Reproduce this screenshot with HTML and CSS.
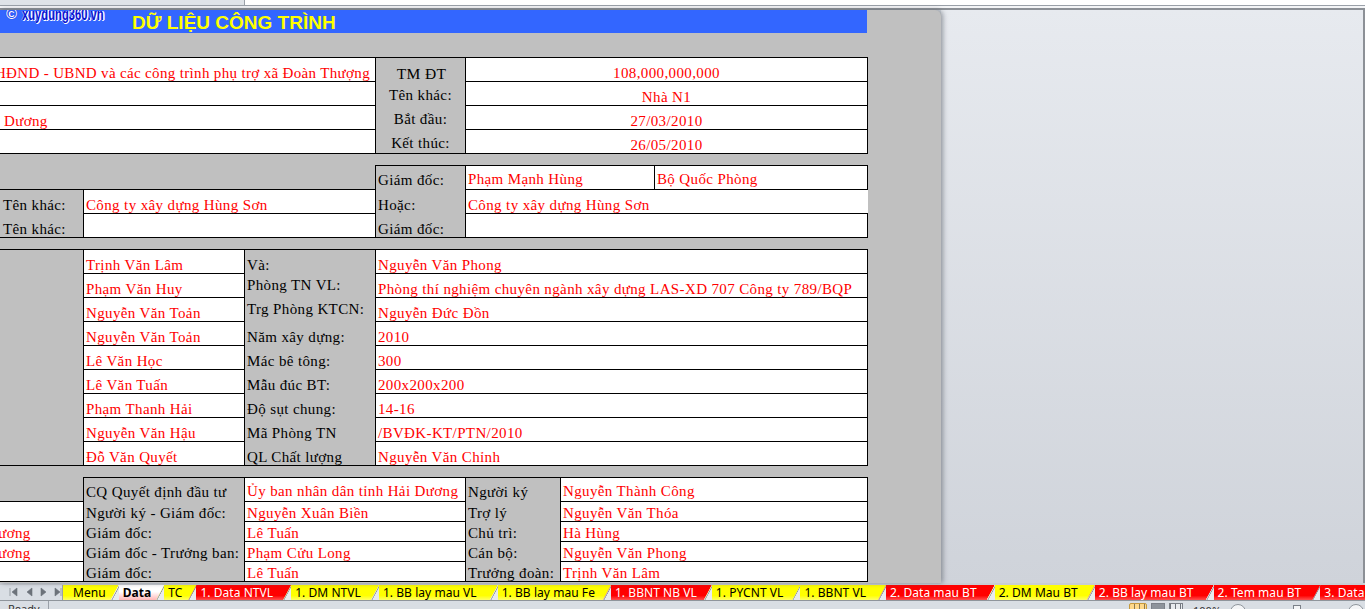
FILE: index.html
```html
<!DOCTYPE html>
<html lang="vi">
<head>
<meta charset="utf-8">
<title>Dữ liệu công trình</title>
<link rel="stylesheet" href="styles.css">
</head>
<body>
<div class="app">
  <div class="top">
    <div class="top-name"></div>
    <div class="top-formula"></div>
  </div>
  <div class="work">
    <div class="sheet">
      <div class="logo"><span class="logo-c">©</span><span class="logo-t">xuydung360.vn</span></div>
      <div class="banner"><h1>DỮ LIỆU CÔNG TRÌNH</h1></div>
      <table class="grid t1">
        <colgroup><col class="c-a"><col class="c-b"><col class="c-c"></colgroup>
        <tr><td class="val end">HĐND - UBND và các công trình phụ trợ xã Đoàn Thượng</td><td class="lab ctr big">TM ĐT</td><td class="val ctr">108,000,000,000</td></tr>
        <tr><td class="val"></td><td class="lab ctr up">Tên khác:</td><td class="val ctr">Nhà N1</td></tr>
        <tr><td class="val ind">Dương</td><td class="lab ctr up">Bắt đầu:</td><td class="val ctr">27/03/2010</td></tr>
        <tr><td class="val"></td><td class="lab ctr up">Kết thúc:</td><td class="val ctr">26/05/2010</td></tr>
      </table>
      <table class="grid t2">
        <colgroup><col class="c-1"><col class="c-2"><col class="c-b"><col class="c-d"><col class="c-e"></colgroup>
        <tr class="raise"><td colspan="2" class="lab open"></td><td class="lab">Giám đốc:</td><td class="val">Phạm Mạnh Hùng</td><td class="val">Bộ Quốc Phòng</td></tr>
        <tr><td class="lab first">Tên khác:</td><td class="val">Công ty xây dựng Hùng Sơn</td><td class="lab">Hoặc:</td><td colspan="2" class="val no-right">Công ty xây dựng Hùng Sơn</td></tr>
        <tr><td class="lab first">Tên khác:</td><td class="val"></td><td class="lab">Giám đốc:</td><td colspan="2" class="val"></td></tr>
      </table>
      <table class="grid t3">
        <colgroup><col class="c-1"><col class="c-3"><col class="c-4"><col class="c-5"></colgroup>
        <tr><td rowspan="9" class="lab whole"></td><td class="val">Trịnh Văn Lâm</td><td class="lab">Và:</td><td class="val">Nguyễn Văn Phong</td></tr>
        <tr><td class="val">Phạm Văn Huy</td><td class="lab mid">Phòng TN VL:</td><td class="val">Phòng thí nghiệm chuyên ngành xây dựng LAS-XD 707 Công ty 789/BQP</td></tr>
        <tr><td class="val">Nguyễn Văn Toản</td><td class="lab mid">Trg Phòng KTCN:</td><td class="val">Nguyễn Đức Đồn</td></tr>
        <tr><td class="val">Nguyễn Văn Toản</td><td class="lab">Năm xây dựng:</td><td class="val">2010</td></tr>
        <tr><td class="val">Lê Văn Học</td><td class="lab">Mác bê tông:</td><td class="val">300</td></tr>
        <tr><td class="val">Lê Văn Tuấn</td><td class="lab">Mẫu đúc BT:</td><td class="val">200x200x200</td></tr>
        <tr><td class="val">Phạm Thanh Hải</td><td class="lab">Độ sụt chung:</td><td class="val">14-16</td></tr>
        <tr><td class="val">Nguyễn Văn Hậu</td><td class="lab">Mã Phòng TN</td><td class="val">/BVĐK-KT/PTN/2010</td></tr>
        <tr><td class="val">Đỗ Văn Quyết</td><td class="lab">QL Chất lượng</td><td class="val">Nguyễn Văn Chỉnh</td></tr>
      </table>
      <table class="grid t4">
        <colgroup><col class="c-1"><col class="c-3"><col class="c-6"><col class="c-7"><col class="c-8"></colgroup>
        <tr class="tall raise"><td class="lab open"></td><td class="lab">CQ Quyết định đầu tư</td><td class="val">Ủy ban nhân dân tỉnh Hải Dương</td><td class="lab">Người ký</td><td class="val">Nguyễn Thành Công</td></tr>
        <tr><td class="val"></td><td class="lab">Người ký - Giám đốc:</td><td class="val">Nguyễn Xuân Biền</td><td class="lab">Trợ lý</td><td class="val">Nguyễn Văn Thóa</td></tr>
        <tr><td class="val cut">Dương</td><td class="lab">Giám đốc:</td><td class="val">Lê Tuấn</td><td class="lab">Chủ trì:</td><td class="val">Hà Hùng</td></tr>
        <tr><td class="val cut">Dương</td><td class="lab">Giám đốc - Trưởng ban:</td><td class="val">Phạm Cửu Long</td><td class="lab">Cán bộ:</td><td class="val">Nguyễn Văn Phong</td></tr>
        <tr><td class="val"></td><td class="lab">Giám đốc:</td><td class="val">Lê Tuấn</td><td class="lab">Trưởng đoàn:</td><td class="val">Trịnh Văn Lâm</td></tr>
      </table>
    </div>
    <div class="space"></div>
  </div>
  <div class="tabbar">
    <div class="nav">
      <svg class="nav-i" width="56" height="12" viewBox="0 0 56 12" aria-hidden="true">
        <path d="M3 2v8M10 2v8L5 6z"/><path d="M25 2v8l-5-4z"/><path d="M34 2v8l5-4z"/><path d="M48 2v8l5-4zM54 2v8"/>
      </svg>
    </div>
    <div class="tabs">
      <span class="tab y">Menu</span>
      <span class="tab on">Data</span>
      <span class="tab y">TC</span>
      <span class="tab r">1. Data NTVL</span>
      <span class="tab y">1. DM NTVL</span>
      <span class="tab y">1. BB lay mau VL</span>
      <span class="tab y">1. BB lay mau Fe</span>
      <span class="tab r">1. BBNT NB VL</span>
      <span class="tab y">1. PYCNT VL</span>
      <span class="tab y">1. BBNT VL</span>
      <span class="tab r">2. Data mau BT</span>
      <span class="tab y">2. DM Mau BT</span>
      <span class="tab r">2. BB lay mau BT</span>
      <span class="tab r">2. Tem mau BT</span>
      <span class="tab r">3. Data</span>
    </div>
  </div>
  <div class="status">
    <span class="ready">Ready</span>
    <div class="views">
      <span class="view active"></span><span class="view plain"></span><span class="view plain"></span>
      <span class="zoom-v">100%</span>
      <span class="circle"></span>
      <span class="track"><i class="thumb"></i></span>
      <span class="circle"></span>
    </div>
  </div>
</div>
</body>
</html>
```
FILE: styles.css
```css
* { box-sizing: border-box; }
html, body { margin: 0; padding: 0; }
body { width: 1365px; height: 609px; overflow: hidden; font-family: "Liberation Serif", serif; }
.app { display: flex; flex-direction: column; width: 1365px; height: 609px; overflow: hidden; background: #d3d8df; }

.top { height: 10px; flex: none; display: flex; border-bottom: 2px solid #8c9096; background: #f4f5f7; }
.top-name { width: 245px; height: 6px; background: #dfe3e8; border-right: 1px solid #9aa0a8; border-bottom: 1px solid #9aa0a8; }
.top-formula { flex: 1; height: 6px; background: #fff; border-bottom: 1px solid #9aa0a8; }

.work { flex: none; height: 573px; display: flex; }
.sheet { width: 941px; flex: none; background: #c0c0c0; overflow: hidden; position: relative; border-top-right-radius: 6px; box-shadow: 2px 0 5px rgba(80, 85, 95, .55); z-index: 1; }
.space { flex: 1; background: linear-gradient(#e7eaef, #cfd3da); border-right: 2px solid #8c9096; }

.banner { width: 867px; height: 23px; background: #3366ff; padding-left: 132px; overflow: hidden; }
.banner h1 { margin: 0; font: bold 19px/25px "Liberation Sans", sans-serif; color: #ffff00; }
.logo { position: absolute; left: 6px; top: -5px; z-index: 2; display: flex; white-space: nowrap; font-family: "Liberation Sans", sans-serif; font-weight: 700; }
.logo-c { font-size: 15px; line-height: 18px; width: 16px; color: #fff; text-shadow: 0 0 1px #0000c8; }
.logo-t { font-size: 17px; line-height: 20px; color: #0a14d2; transform: scaleX(.66); transform-origin: left center; text-shadow: 1px 1px 0 #fff, 2px 0 0 #fff, -1px 0 0 rgba(255, 255, 255, .5); }

.grid { border-collapse: collapse; table-layout: fixed; width: 907px; margin-left: -40px; margin-top: 11px; font-size: 15px; }
.t1 { margin-top: 24px; }
.grid tr { height: 24px; }
.t4 tr { height: 20px; }
.t4 tr.tall { height: 24px; }
.grid td { border: 1px solid #000; padding: 0 0 0 2px; line-height: 16px; vertical-align: bottom; white-space: nowrap; overflow: hidden; letter-spacing: .37px; }
.grid .lab { background: #c0c0c0; color: #000; border-top: none; border-bottom: none; padding-bottom: 1px; }
.grid tr:first-child .lab { border-top: 1px solid #000; }
.grid tr:last-child .lab { border-bottom: 1px solid #000; padding-bottom: 0; }
.grid .whole { border-bottom: 1px solid #000; }
.val { background: #fff; color: #f00; }
.grid .ctr { text-align: center; padding-left: 0; }
.grid .end { text-align: right; padding-right: 5px; letter-spacing: .34px; }
.grid .big { font-size: 15.5px; padding-bottom: 0; padding-left: 2px; }
.grid .up { padding-bottom: 3px; }
.grid tr:last-child .up { padding-bottom: 2px; }
.grid .first { padding-left: 42px; }
.grid .ind { padding-left: 43px; }
.grid .cut { padding-left: 26px; }
.grid .mid { vertical-align: middle; }
.grid tr:first-child .open { border-top: none; border-left: none; border-bottom: 1px solid #000; }
.grid .no-right { border-right: none; }
.grid .raise td { padding-bottom: 2px; }

.c-a { width: 415px; }
.c-b { width: 90px; }
.c-c { width: 402px; }
.c-1 { width: 123px; }
.c-2 { width: 292px; }
.c-d { width: 189px; }
.c-e { width: 213px; }
.c-3 { width: 161px; }
.c-4 { width: 131px; }
.c-5 { width: 492px; }
.c-6 { width: 221px; }
.c-7 { width: 95px; }
.c-8 { width: 307px; }

.tabbar { flex: none; height: 18px; display: flex; background: #d9dee4; border-top: 2px solid #c9cdd3; border-bottom: 1px solid #8f959c; font: 12px/15px "Noto Sans", sans-serif; }
.nav { width: 63px; flex: none; padding: 1px 0 0 7px; border-right: 1px solid #9aa0a8; }
.nav-i { display: block; fill: #6c727a; stroke: #6c727a; stroke-width: .6; }
.tabs { display: flex; flex: 1; overflow: hidden; padding-right: 3px; }
.tab { flex: none; height: 15px; padding: 0 16px 0 12px; margin-left: -8px; letter-spacing: .05px; white-space: nowrap; position: relative; clip-path: polygon(0 100%, 8px 0, 100% 0, 100% 100%); }
.tab:first-child { margin-left: 0; padding: 0 13px 0 10px; clip-path: none; }
.tab:nth-child(2) { padding-right: 13px; }
.tab:nth-child(3) { padding-right: 14px; }
.tab:nth-child(4) { padding-right: 18px; }
.tab:nth-child(5) { padding-right: 18px; }
.tab:nth-child(6) { padding-right: 21px; }
.tab:nth-child(8) { padding-right: 15px; }
.tab:nth-child(9) { padding-right: 17px; }
.tab:nth-child(10) { padding-right: 20px; }
.tab:nth-child(11) { padding-right: 18px; }
.tab:nth-child(12) { padding-right: 17px; }
.tab:nth-child(13) { padding-right: 20px; }
.tab:nth-child(14) { padding-right: 19px; }
.tab::after { content: ""; position: absolute; left: 0; top: 0; width: 8px; height: 15px; background: linear-gradient(to bottom right, transparent 46%, #fff 48%, #8f959c 56%, #e8ebef 60%, #e8ebef 100%); }
.tab:first-child::after { display: none; }
.y { background: linear-gradient(#ffff00 70%, #ffff66); color: #000; }
.r { background: linear-gradient(#ff0000 70%, #ff5050); color: #fff; }
.on { background: linear-gradient(#fff 45%, #ffb6b6); color: #000; font-weight: 700; }

.status { flex: 1; display: flex; justify-content: space-between; background: #d9dee4; font: 11px/12px "Noto Sans", sans-serif; color: #333; overflow: hidden; }
.ready { width: 49px; padding: 2px 0 0 8px; border-right: 1px solid #9aa0a8; }
.views { display: flex; align-items: flex-start; width: 236px; flex: none; }
.view { width: 14px; height: 12px; margin: 2px 4px 0 0; background: repeating-linear-gradient(90deg, #6f747c 0 1px, #e8ebef 1px 5px); border: 1px solid #7b8088; }
.view.active { width: 18px; background: repeating-linear-gradient(90deg, #ffd98a 0 4px, #8a7a55 4px 5px); border: 1px solid #c79a3c; border-radius: 2px; }
.view.plain:nth-child(2) { background: #8d939b; }
.zoom-v { width: 35px; margin: 0 2px 0 6px; padding-top: 4px; }
.circle { width: 16px; height: 16px; flex: none; margin-top: 3px; border: 1px solid #8f959c; border-radius: 50%; background: #f4f5f7; }
.track { width: 102px; flex: none; display: block; position: relative; }
.thumb { position: absolute; left: 47px; top: 4px; width: 8px; height: 12px; background: #f4f5f7; border: 1px solid #7b8088; }
```
